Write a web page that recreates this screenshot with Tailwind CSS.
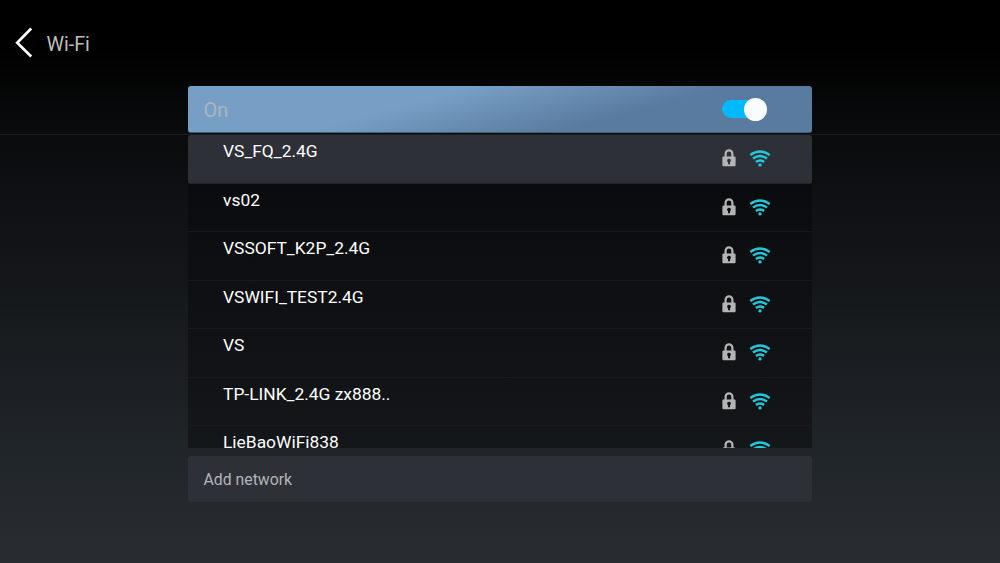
<!DOCTYPE html>
<html lang="en">
<head>
  <meta charset="UTF-8" />
  <meta name="viewport" content="width=device-width, initial-scale=1.0" />
  <title>Wi-Fi</title>
  <script src="https://cdn.jsdelivr.net/npm/@tailwindcss/browser@4"></script>
</head>
<body class="h-screen overflow-hidden bg-[linear-gradient(#000_7%,#0a0b0d_24%,#15181b_52%,#20252a_80%,#292d32_100%)] font-[Roboto,sans-serif] text-white">

  <!-- Shared icons -->
  <svg class="hidden">
    <symbol id="lock" viewBox="0 0 14 18">
      <path d="M3.600 8V4.700a3.400 3.400 0 0 1 6.800 0V8" fill="none" stroke="currentColor" stroke-width="2.200" />
      <path fill-rule="evenodd" fill="currentColor" d="M1.400 7.600h11.200q1 0 1 1v7.600q0 1-1 1H1.400q-1 0-1-1V8.600q0-1 1-1zM7 9.700a1.900 1.900 0 0 0-1 3.500v2h2v-2a1.900 1.900 0 0 0-1-3.500z" />
    </symbol>
    <symbol id="wifi" viewBox="0 0 22 18">
      <g fill="none" stroke="currentColor" stroke-width="2.500">
        <path d="M1.300 6Q11-1 20.700 6" />
        <path d="M4 9.600Q11 4.400 18 9.600" />
        <path d="M6.900 12.900Q11 10 15.100 12.900" />
      </g>
      <circle cx="11" cy="15.900" r="1.700" fill="currentColor" />
    </symbol>
  </svg>

  <header class="flex h-[135px] border-b border-[#1a1e1e] pt-[27px] pl-[15px]">
    <svg class="h-[31px] w-[18px]" viewBox="0 0 18 31" fill="none" stroke="white" stroke-width="2.700">
      <path d="M16.200 1.500L2.200 15.700L16.200 29.500" />
    </svg>
    <h1 class="ml-[13.500px] mt-[3px] text-[19.700px] leading-[30px] text-[#bdbdbd]">Wi-Fi</h1>
  </header>

  <main class="relative mx-auto -mt-[49.500px] w-[624px]">
    <div class="flex h-[47px] items-center justify-between rounded-[3px] border-b border-[#3f6078] bg-linear-[165deg,#779fc5_36%,#5a7ba0_68%] pr-[45px] pl-[15.500px]">
      <span class="pt-[3px] text-[20px] text-[#a9b6c2]">On</span>
      <div class="mt-px flex h-[18px] w-[45px] items-center justify-end rounded-full bg-[#00b9ff]">
        <div class="size-[23px] shrink-0 rounded-full bg-[#fafdff]"></div>
      </div>
    </div>

    <!-- Networks, cut off where the scroll area ends -->
    <ul id="networks" class="mt-[2.500px] h-[313px] overflow-hidden bg-linear-to-b from-[#08090b] to-[#14171a]"></ul>

    <div class="mt-[8px] flex h-[46px] items-center rounded-[3px] bg-[#2d3037] pt-[2px] pl-[15.500px] text-[15.800px] text-[#b3b4b7]">Add network</div>
  </main>

  <script>
    const networks = ["VS_FQ_2.4G", "vs02", "VSSOFT_K2P_2.4G", "VSWIFI_TEST2.4G", "VS", "TP-LINK_2.4G zx888..", "LieBaoWiFi838"];

    document.getElementById("networks").innerHTML = networks.map((name, i) => `
      <li class="flex h-[48.550px] justify-between border-b pr-[41px] pl-[35px] ${i === 0 ? "rounded-[3px] border-[#23252a] bg-[#2e3037]" : "border-[#181b1d]"}">
        <span class="pt-[4px] text-[17.400px] leading-[24px]">${name}</span>
        <span class="flex gap-[13px] pt-[14px]">
          <svg class="h-[18px] w-[14px] text-[#b4b4b4]"><use href="#lock" /></svg>
          <svg class="h-[18px] w-[22px] text-[#23c8da]"><use href="#wifi" /></svg>
        </span>
      </li>`).join("");
  </script>
</body>
</html>
